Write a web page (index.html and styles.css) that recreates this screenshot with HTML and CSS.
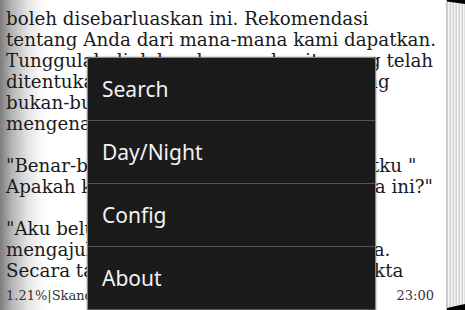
FILE: index.html
```html
<!DOCTYPE html>
<html lang="id">
<head>
<meta charset="utf-8">
<title>Reader</title>
<link rel="stylesheet" href="styles.css">
</head>
<body>
<div class="screen">
  <main class="page">
    <div class="text">
      <span class="ln">boleh disebarluaskan ini. Rekomendasi</span>
      <span class="ln">tentang Anda dari mana-mana kami dapatkan.</span>
      <span class="ln">Tunggulah di dalam kamar, dan itu yang telah</span>
      <span class="ln">ditentukan, bahwa ia akan segera datang</span>
      <span class="ln">bukan-bukan orang biasa</span>
      <span class="ln">mengenakan topeng.</span>
      <span class="ln blank">&nbsp;</span>
      <span class="ln">"Benar-benar aneh sekali," kata sahabatku "</span>
      <span class="ln">Apakah kamu tahu maksud surat rahasia ini?"</span>
      <span class="ln blank">&nbsp;</span>
      <span class="ln">"Aku belum punya data. Salah besar</span>
      <span class="ln">mengajukan teori sebelum memiliki data.</span>
      <span class="ln">Secara tak sadar kita mulai memutar fakta</span>
    </div>
    <div class="status">
      <span class="progress">1.21%|Skandal di Bohemia</span>
      <span class="clock">23:00</span>
    </div>
  </main>
  <div class="stack">
    <svg class="wedges" width="18" height="310" viewBox="0 0 18 310">
      <polygon points="0,0 18,0 18,4 0,1.5" fill="#000"/>
      <polygon points="0,308 18,304 18,310 0,310" fill="#000"/>
    </svg>
  </div>

  <nav class="menu">
    <div class="item">Search</div>
    <div class="item">Day/Night</div>
    <div class="item">Config</div>
    <div class="item">About</div>
  </nav>
</div>
</body>
</html>
```
FILE: styles.css
```css
html, body {
  margin: 0;
  padding: 0;
  background: #fff;
}

.screen {
  position: relative;
  width: 465px;
  height: 310px;
  overflow: hidden;
  display: flex;
}

.page {
  flex: 1;
  display: flex;
  flex-direction: column;
  padding: 8px 12px 6px 6px;
  background: linear-gradient(to right, #7d7d7d 0px, #b5b5b5 12px, #e4e4e4 28px, #fafafa 42px, #fff 50px);
  min-width: 0;
}

.text {
  font-family: "DejaVu Serif", serif;
  font-size: 18.25px;
  line-height: 21px;
  color: #1a1a1a;
}

.ln {
  display: block;
  white-space: nowrap;
}

.status {
  margin-top: auto;
  display: flex;
  justify-content: space-between;
  font-family: "DejaVu Serif", serif;
  font-size: 13px;
  line-height: 16px;
  color: #333;
}

.stack {
  position: relative;
  width: 18px;
  background:
    repeating-linear-gradient(to right, #d2d2d2 0px, #d2d2d2 1px, #f6f6f6 1px, #f6f6f6 2px, #e2e2e2 2px, #e2e2e2 3px);
  border-left: 1px solid #c4c4c4;
}

.wedges {
  position: absolute;
  left: 0;
  top: 0;
}

.menu {
  position: absolute;
  left: 87px;
  top: 57px;
  width: 287px;
  height: 270px;
  background: #1b1b1b;
  border: 1px solid #8a8a8a;
  border-radius: 3px;
  box-shadow: 0 0 2px rgba(0,0,0,0.5);
}

.item {
  height: 62px;
  display: flex;
  align-items: center;
  padding-left: 14px;
  font-family: "Noto Sans", "Open Sans", sans-serif;
  font-size: 21px;
  color: #f2f2f2;
  border-bottom: 1px solid #555;
}
```
